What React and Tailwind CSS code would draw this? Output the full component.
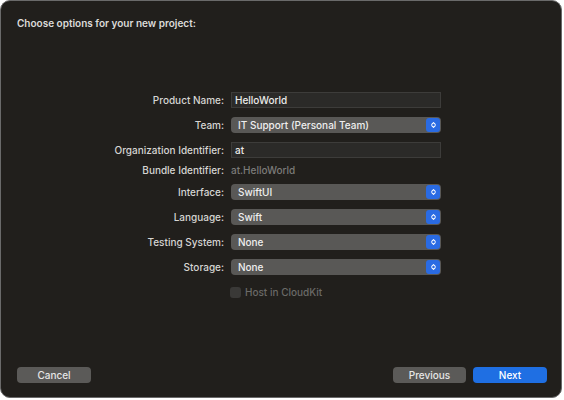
import { ChevronUp, ChevronDown } from "lucide-react"

const font = { fontFamily: "Inter, 'Noto Sans', sans-serif" }

function Label({ children }) {
  return (
    <div className="w-[224px] shrink-0 pr-[1px] text-right text-[10px] font-medium leading-4 text-[#d6d5d3]">
      {children}
    </div>
  )
}

function TextField({ value }) {
  return (
    <div className="ml-[6px] flex h-4 w-[210px] items-center border border-[#3d3c3a] bg-[#2b2a28] px-[3px] text-[10px] font-medium text-[#ecebea]">
      {value}
    </div>
  )
}

function Popup({ value }) {
  return (
    <div className="ml-[6px] flex h-4 w-[210px] items-center rounded-[4px] bg-[#595856] pl-[7px] pr-[1px] text-[10px] font-medium text-[#eeeeee]">
      <span className="flex-1">{value}</span>
      <span className="flex h-[14px] w-[14px] flex-col items-center justify-center rounded-[3px] bg-[#2a6be3] text-white">
        <ChevronUp className="-mb-[2px] h-[7px] w-[7px]" strokeWidth={3.5} />
        <ChevronDown className="-mt-[2px] h-[7px] w-[7px]" strokeWidth={3.5} />
      </span>
    </div>
  )
}

function Row({ label, children, className }) {
  return (
    <div className={`flex h-4 items-center ${className}`}>
      <Label>{label}</Label>
      {children}
    </div>
  )
}

export default function App() {
  return (
    <div className="h-[400px] w-[564px] bg-white" style={font}>
      <div className="flex h-[398px] w-[562px] flex-col overflow-hidden rounded-[10px] border border-[#6a6a6a] bg-[#211f1c]">
        <div className="px-[16px] pt-[14px] text-[10px] font-semibold leading-4 text-[#dcdbd9]">
          Choose options for your new project:
        </div>

        <div className="mt-[61px] flex flex-col">
          <Row label="Product Name:" className="mb-[9px]">
            <TextField value="HelloWorld" />
          </Row>
          <Row label="Team:" className="mb-[9px]">
            <Popup value="IT Support (Personal Team)" />
          </Row>
          <Row label="Organization Identifier:" className="mb-[4px]">
            <TextField value="at" />
          </Row>
          <Row label="Bundle Identifier:" className="mb-[6px]">
            <span className="ml-[6px] text-[10px] font-medium text-[#7c7b79]">at.HelloWorld</span>
          </Row>
          <Row label="Interface:" className="mb-[9px]">
            <Popup value="SwiftUI" />
          </Row>
          <Row label="Language:" className="mb-[9px]">
            <Popup value="Swift" />
          </Row>
          <Row label="Testing System:" className="mb-[9px]">
            <Popup value="None" />
          </Row>
          <Row label="Storage:" className="mb-[9px]">
            <Popup value="None" />
          </Row>
          <div className="flex h-4 items-center pl-[229px]">
            <span className="h-[11px] w-[11px] rounded-[3px] bg-[#3a3937]" />
            <span className="ml-[4px] text-[10px] font-medium text-[#6b6a68]">Host in CloudKit</span>
          </div>
        </div>

        <div className="mt-auto mb-[14px] flex items-center pl-[16px] pr-[14px]">
          <button className="h-4 w-[74px] rounded-[4px] bg-[#5b5a58] text-[10px] font-medium leading-4 text-[#e6e6e6]">
            Cancel
          </button>
          <div className="flex-1" />
          <button className="h-4 w-[73px] rounded-[4px] bg-[#5b5a58] text-[10px] font-medium leading-4 text-[#e6e6e6]">
            Previous
          </button>
          <button className="ml-[7px] h-4 w-[74px] rounded-[4px] bg-[#1f6fe3] text-[10px] font-medium leading-4 text-white">
            Next
          </button>
        </div>
      </div>
    </div>
  )
}
